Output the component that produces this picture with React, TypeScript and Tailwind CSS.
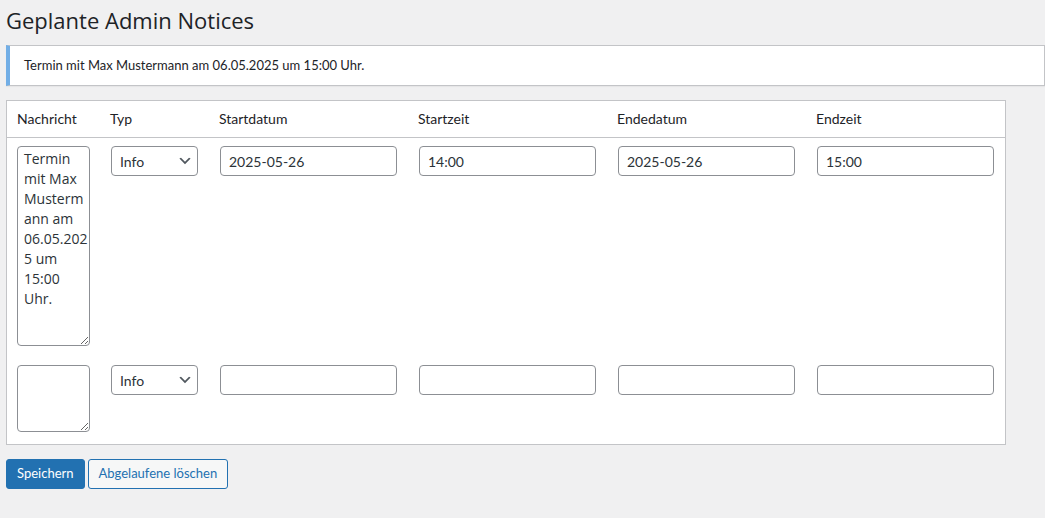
import { useState } from "react";

type Notice = {
  message: string;
  type: string;
  startDate: string;
  startTime: string;
  endDate: string;
  endTime: string;
};

const font = "font-['Lato','Open_Sans',sans-serif]";

const inputCls =
  "h-[30px] w-[177px] rounded-[4px] border border-[#8c8f94] bg-white px-2 text-[14px] text-[#2c3338] outline-none";

function Chevron() {
  return (
    <svg width="16" height="16" viewBox="0 0 20 20" aria-hidden="true">
      <path d="M5 6l5 5 5-5 2 1-7 7-7-7 2-1z" fill="#50575e" />
    </svg>
  );
}

function Row({ notice, tall }: { notice: Notice; tall: boolean }) {
  const [data, setData] = useState(notice);
  const set = (k: keyof Notice) => (e: React.ChangeEvent<HTMLInputElement | HTMLTextAreaElement>) =>
    setData({ ...data, [k]: e.target.value });

  return (
    <div className={`grid grid-cols-[93px_109px_199px_199px_199px_199px] pt-2 ${tall ? "pb-[11px]" : "pb-[12px]"}`}>
      <div className="pl-[10px] pr-[10px]">
        <textarea
          value={data.message}
          onChange={set("message")}
          className={`block w-[73px] resize-y rounded-[4px] border border-[#8c8f94] bg-white py-[2px] pl-[6px] pr-0 font-['Open_Sans',sans-serif] text-[14px] leading-[20px] text-[#2c3338] outline-none ${
            tall ? "h-[200px]" : "h-[67px]"
          }`}
        />
      </div>
      <div className="pl-[11px] pr-[10px]">
        <div className="relative w-[87px]">
          <select
            value={data.type}
            onChange={(e) => setData({ ...data, type: e.target.value })}
            className="h-[30px] w-full appearance-none rounded-[4px] border border-[#8c8f94] bg-white pl-2 pr-6 text-[14px] text-[#2c3338] outline-none"
          >
            <option>Info</option>
            <option>Warnung</option>
            <option>Fehler</option>
            <option>Erfolg</option>
          </select>
          <span className="pointer-events-none absolute right-[5px] top-[7px]">
            <Chevron />
          </span>
        </div>
      </div>
      <div className="pl-[11px] pr-[10px]">
        <input value={data.startDate} onChange={set("startDate")} className={inputCls} />
      </div>
      <div className="pl-[11px] pr-[10px]">
        <input value={data.startTime} onChange={set("startTime")} className={inputCls} />
      </div>
      <div className="pl-[11px] pr-[10px]">
        <input value={data.endDate} onChange={set("endDate")} className={inputCls} />
      </div>
      <div className="pl-[11px] pr-[10px]">
        <input value={data.endTime} onChange={set("endTime")} className={inputCls} />
      </div>
    </div>
  );
}

export default function App() {
  const notices: Notice[] = [
    {
      message: "Termin mit Max Mustermann am 06.05.2025 um 15:00 Uhr.",
      type: "Info",
      startDate: "2025-05-26",
      startTime: "14:00",
      endDate: "2025-05-26",
      endTime: "15:00",
    },
    { message: "", type: "Info", startDate: "", startTime: "", endDate: "", endTime: "" },
  ];

  return (
    <div className={`min-h-[518px] bg-[#f0f0f1] text-[#1d2327] ${font}`}>
      <div className="pl-[6px]">
        {/* Seitentitel */}
        <h1 className="pt-[6px] font-['Open_Sans',sans-serif] text-[22px] leading-[29px] font-normal">
          Geplante Admin Notices
        </h1>

        {/* Aktive Notice */}
        <div className="mt-[10px] flex h-[41px] items-center border border-l-4 border-[#c3c4c7] border-l-[#72aee6] bg-white pl-[14px] text-[13px] shadow-[0_1px_1px_rgba(0,0,0,0.04)]">
          Termin mit Max Mustermann am 06.05.2025 um 15:00 Uhr.
        </div>

        {/* Tabelle */}
        <div className="mt-[14px] w-[1000px] border border-[#c3c4c7] bg-white">
          <div className="grid h-[37px] grid-cols-[93px_109px_199px_199px_199px_199px] items-center border-b border-[#c3c4c7] pb-[1px] text-[14px]">
            <div className="pl-[10px]">Nachricht</div>
            <div className="pl-[10px]">Typ</div>
            <div className="pl-[10px]">Startdatum</div>
            <div className="pl-[10px]">Startzeit</div>
            <div className="pl-[10px]">Endedatum</div>
            <div className="pl-[10px]">Endzeit</div>
          </div>
          {notices.map((n, i) => (
            <Row key={i} notice={n} tall={i === 0} />
          ))}
        </div>

        {/* Aktionen */}
        <div className="mt-[14px] flex gap-[3px]">
          <button className="h-[30px] rounded-[3px] border border-[#2271b1] bg-[#2271b1] px-[10px] text-[13px] text-white">
            Speichern
          </button>
          <button className="h-[30px] rounded-[3px] border border-[#2271b1] bg-[#f6f7f7] px-[10px] text-[13px] text-[#2271b1]">
            Abgelaufene löschen
          </button>
        </div>
      </div>
    </div>
  );
}
